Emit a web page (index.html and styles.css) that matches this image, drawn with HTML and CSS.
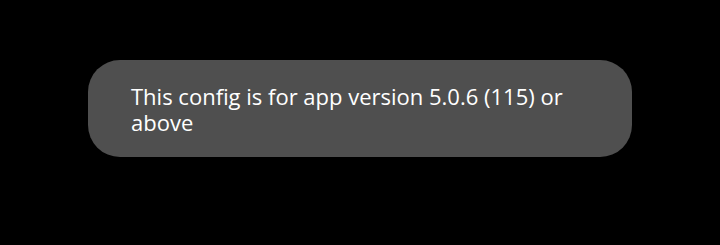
FILE: index.html
```html
<!DOCTYPE html>
<html>
<head>
<meta charset="utf-8">
<link rel="stylesheet" href="styles.css">
</head>
<body>
<div class="stage">
  <div class="toast">This config is for app version 5.0.6 (115) or above</div>
</div>
</body>
</html>
```
FILE: styles.css
```css
html, body {
  margin: 0;
  padding: 0;
  background: #000;
}
.stage {
  width: 720px;
  height: 245px;
  padding: 60px 0 0 88px;
  box-sizing: border-box;
}
.toast {
  width: 544px;
  height: 97px;
  box-sizing: border-box;
  padding: 23px 50px 0 43px;
  background: #4f4f4f;
  border-radius: 32px;
  color: #fff;
  font-family: "Open Sans", "Noto Sans", sans-serif;
  font-size: 22px;
  font-weight: 500;
  line-height: 26px;
}
```
